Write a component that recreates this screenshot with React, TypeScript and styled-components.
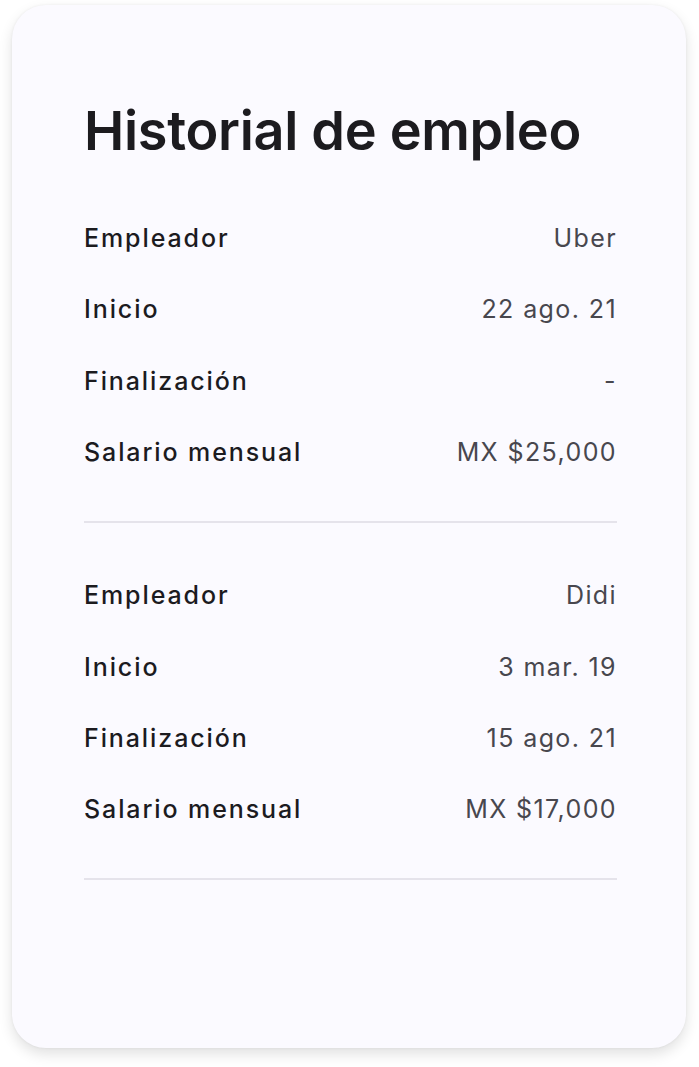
import * as React from 'react';
import styled, {createGlobalStyle} from "styled-components";

const GlobalStyle = createGlobalStyle`
  body {
    margin: 0;
    background: #ffffff;
    font-family: Inter, "Noto Sans", sans-serif;
  }
`;

const Page = styled.div`
  padding: 5px 13px 19px 12px;
`;

const Card = styled.div`
  box-sizing: border-box;
  height: 1043px;
  background: #fbfaff;
  border-radius: 34px;
  box-shadow: 0 6px 14px rgba(0, 0, 0, 0.12), 0 0 3px rgba(0, 0, 0, 0.06);
  padding: 92px 69px 0 72px;
`;

const Title = styled.h1`
  margin: 0 0 58px;
  font-size: 54px;
  line-height: 68px;
  font-weight: 600;
  color: #1c1b1f;
  letter-spacing: -0.3px;
`;

const Group = styled.div`
  display: flex;
  flex-direction: column;
  gap: 41.4px;
  padding-bottom: 54px;
  margin-bottom: 57px;
  border-bottom: 2px solid #e5e3eb;
`;

const Row = styled.div`
  display: flex;
  justify-content: space-between;
  align-items: baseline;
  font-size: 25px;
  line-height: 30px;
`;

const Label = styled.span`
  color: #1c1b1f;
  font-weight: 450;
  letter-spacing: 1.9px;
`;

const Value = styled.span`
  color: #48474e;
  font-weight: 400;
  letter-spacing: 1.4px;
`;

interface IJob {
    employer: string,
    start: string,
    end: string,
    salary: string
}

const jobs: IJob[] = [
    {employer: 'Uber', start: '22 ago. 21', end: '-', salary: 'MX $25,000'},
    {employer: 'Didi', start: '3 mar. 19', end: '15 ago. 21', salary: 'MX $17,000'}
];

const App = () => (
    <Page>
        <GlobalStyle/>
        <Card>
            <Title>Historial de empleo</Title>
            {jobs.map(job => (
                <Group key={job.employer}>
                    <Row><Label>Empleador</Label><Value>{job.employer}</Value></Row>
                    <Row><Label>Inicio</Label><Value>{job.start}</Value></Row>
                    <Row><Label>Finalización</Label><Value>{job.end}</Value></Row>
                    <Row><Label>Salario mensual</Label><Value>{job.salary}</Value></Row>
                </Group>
            ))}
        </Card>
    </Page>
);

export default App;
